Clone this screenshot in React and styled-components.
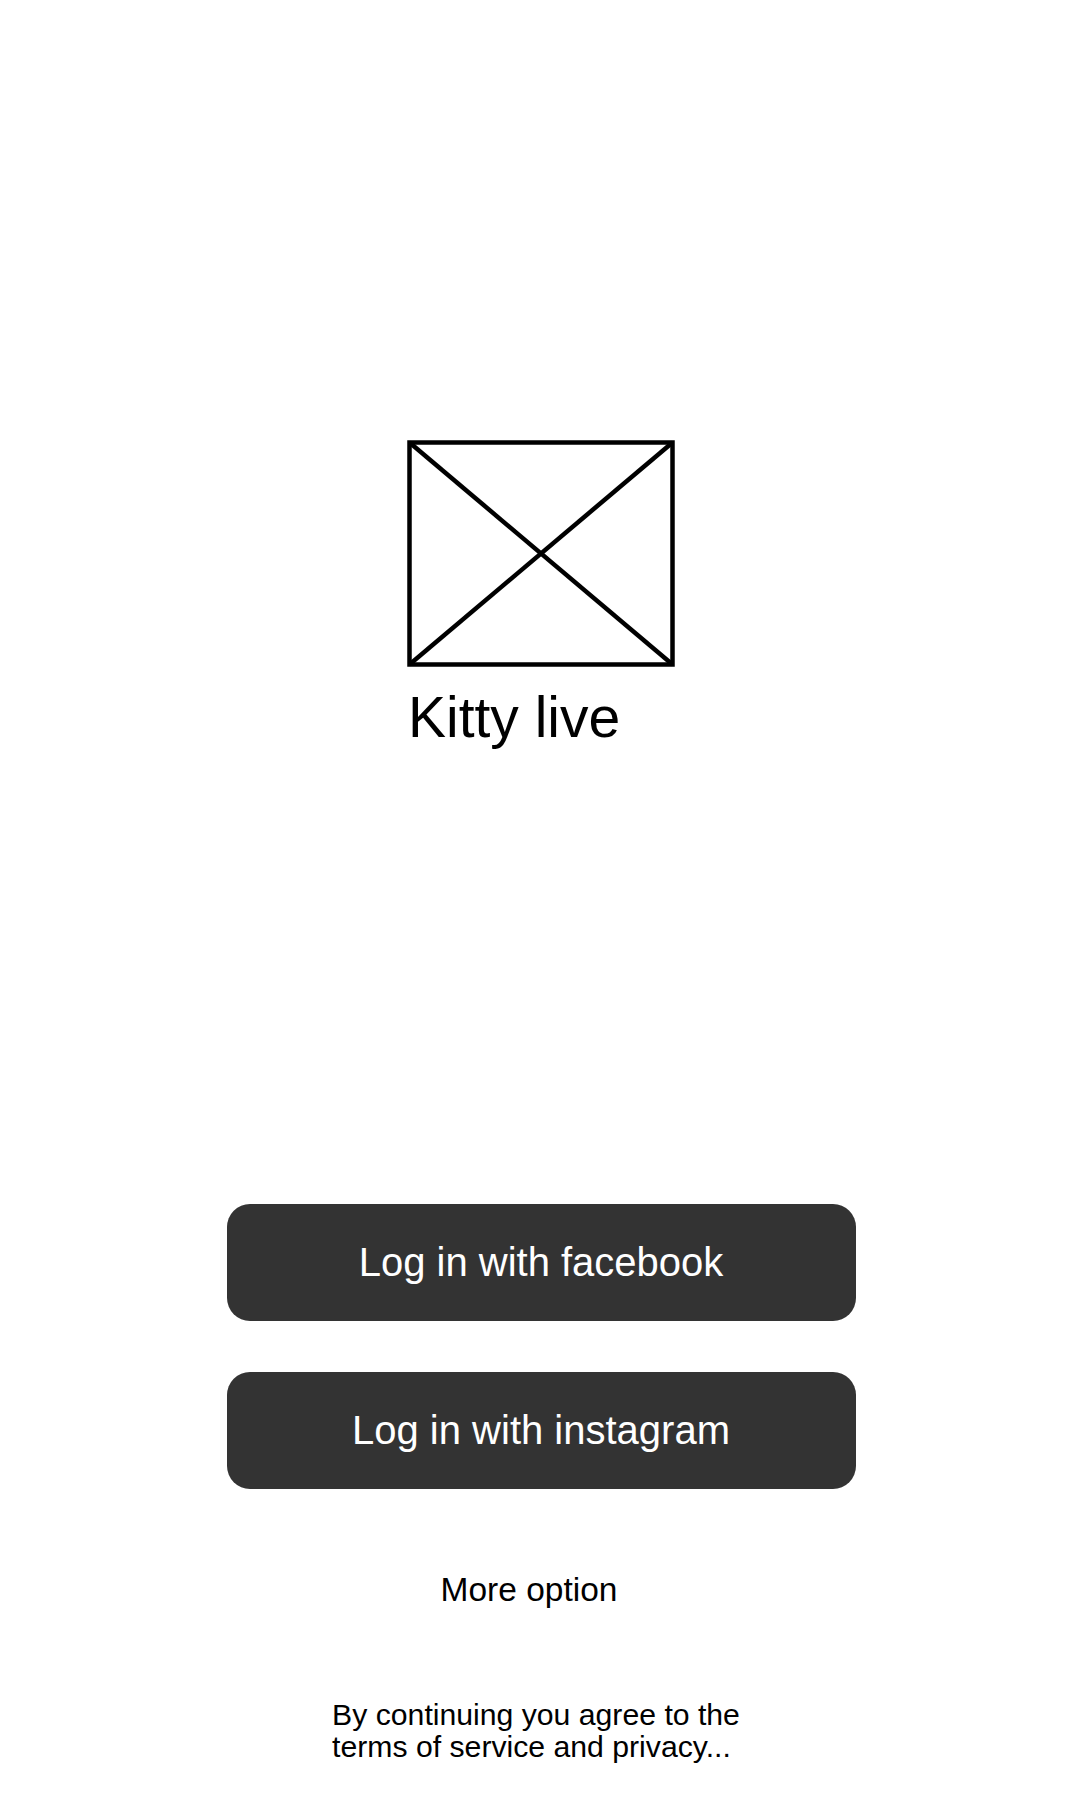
import React from 'react';
import styled, { createGlobalStyle } from 'styled-components';

const GlobalStyle = createGlobalStyle`
    html, body {
        margin: 0;
        padding: 0;
        background: #ffffff;
    }
    body {
        font-family: "Liberation Sans", Arial, sans-serif;
        color: #000000;
    }
`;

const Page = styled.div`
    min-height: 1800px;
    display: flex;
    flex-direction: column;
    align-items: center;
    padding-top: 440px;
    box-sizing: border-box;
`;

const Brand = styled.div`
    width: 268px;
    display: flex;
    flex-direction: column;
    margin-left: 2px;
`;

const Placeholder = styled.svg`
    display: block;
    width: 268px;
    height: 227px;
`;

const Title = styled.h1`
    margin: 18px 0 0 1px;
    font-size: 57px;
    font-weight: 400;
    line-height: 64px;
    white-space: nowrap;
`;

const Actions = styled.div`
    margin-top: 455px;
    margin-left: 2px;
    display: flex;
    flex-direction: column;
    gap: 51px;
`;

const LoginButton = styled.button`
    width: 629px;
    height: 117px;
    border: none;
    border-radius: 23px;
    background: #333333;
    color: #ffffff;
    font-family: "Liberation Sans", Arial, sans-serif;
    font-size: 40px;
    cursor: pointer;
`;

const MoreOption = styled.button`
    margin-top: 82px;
    margin-right: 22px;
    border: none;
    background: none;
    padding: 0;
    font-family: "Liberation Sans", Arial, sans-serif;
    font-size: 33.5px;
    line-height: 38px;
    color: #000000;
    cursor: pointer;
`;

const Terms = styled.p`
    margin: 90px 8px 0 0;
    font-size: 30.2px;
    line-height: 32px;
    text-align: left;
`;

const App = () => (
    <>
        <GlobalStyle />
        <Page>
            <Brand>
                <Placeholder viewBox="0 0 268 227">
                    <rect x="2.5" y="2.5" width="263" height="222" fill="none" stroke="#000" strokeWidth="4.5" />
                    <line x1="2.5" y1="2.5" x2="265.5" y2="224.5" stroke="#000" strokeWidth="4.5" />
                    <line x1="265.5" y1="2.5" x2="2.5" y2="224.5" stroke="#000" strokeWidth="4.5" />
                </Placeholder>
                <Title>Kitty live</Title>
            </Brand>
            <Actions>
                <LoginButton>Log in with facebook</LoginButton>
                <LoginButton>Log in with instagram</LoginButton>
            </Actions>
            <MoreOption>More option</MoreOption>
            <Terms>
                By continuing you agree to the
                <br />
                terms of service and privacy...
            </Terms>
        </Page>
    </>
);

export default App;
